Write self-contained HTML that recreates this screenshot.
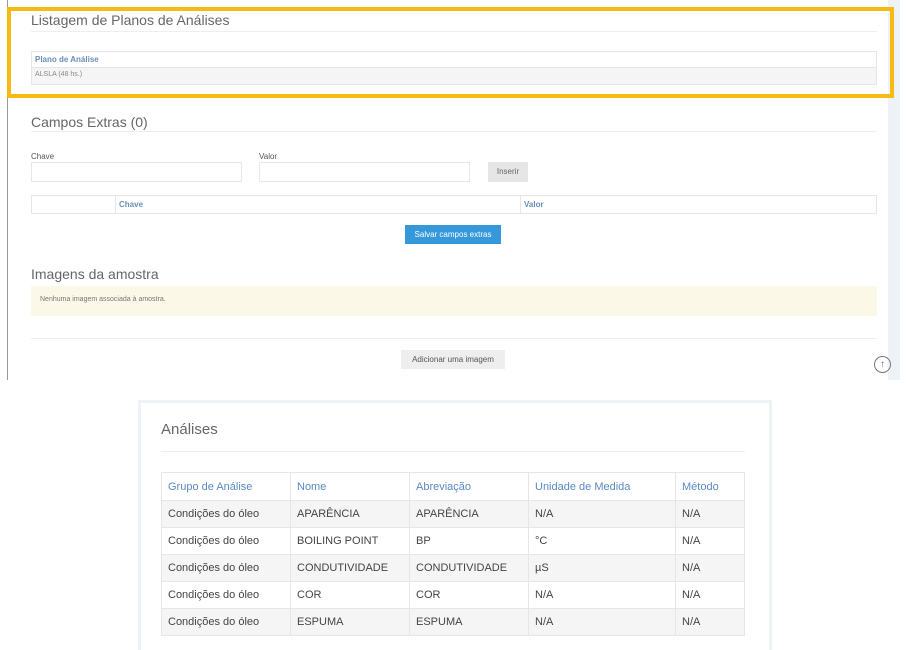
<!DOCTYPE html>
<html><head><meta charset="utf-8"><style>
*{box-sizing:border-box;margin:0;padding:0}
body{width:910px;height:642px;background:#fff;font-family:"Liberation Sans",sans-serif;position:relative;overflow:hidden;color:#555}
.abs{position:absolute}
.h{font-size:14px;color:#666}
.hr{position:absolute;height:1px;background:#eee}
.lbl{font-size:8px;color:#555}
.inp{position:absolute;border:1px solid #e8e8e8;background:#fff}
table{border-collapse:collapse}
</style></head><body>
<div class="abs" style="left:7px;top:0;width:1px;height:380px;background:#999"></div>
<div class="abs" style="left:888px;top:0;width:12px;height:380px;background:#eef2f7"></div>
<div class="abs h" style="left:31px;top:12px">Listagem de Planos de Análises</div>
<div class="hr" style="left:31px;top:31px;width:846px"></div>
<div class="abs" style="left:31px;top:51px;width:846px;height:34px;border:1px solid #e6e6e6">
 <div style="height:16px;border-bottom:1px solid #e6e6e6;font-size:8px;color:#6a8fbf;font-weight:bold;padding:3px 0 0 3px">Plano de Análise</div>
 <div style="height:16px;background:#f5f5f5;font-size:7px;color:#888;padding:3px 0 0 3px">ALSLA (48 hs.)</div>
</div>
<div class="abs" style="left:7px;top:7px;width:887px;height:91px;border:4px solid #f5bb12"></div>
<div class="abs h" style="left:31px;top:114px">Campos Extras (0)</div>
<div class="hr" style="left:31px;top:131px;width:846px"></div>
<div class="abs lbl" style="left:31px;top:152px">Chave</div>
<div class="abs lbl" style="left:259px;top:152px">Valor</div>
<div class="inp" style="left:31px;top:162px;width:211px;height:20px"></div>
<div class="inp" style="left:259px;top:162px;width:211px;height:20px"></div>
<div class="abs" style="left:488px;top:162px;width:40px;height:20px;background:#e6e6e6;font-size:8px;color:#666;text-align:center;line-height:20px">Inserir</div>
<div class="abs" style="left:31px;top:195px;width:846px;height:19px;border:1px solid #e6e6e6;font-size:8px;color:#6a8fbf;font-weight:bold">
 <div class="abs" style="left:83px;top:0;height:17px;border-left:1px solid #e6e6e6;padding:4px 0 0 3px">Chave</div>
 <div class="abs" style="left:488px;top:0;height:17px;border-left:1px solid #e6e6e6;padding:4px 0 0 3px">Valor</div>
</div>
<div class="abs" style="left:405px;top:225px;width:96px;height:19px;background:#3498db;color:#fff;font-size:8px;text-align:center;line-height:19px">Salvar campos extras</div>
<div class="abs h" style="left:31px;top:266px">Imagens da amostra</div>
<div class="abs" style="left:31px;top:286px;width:846px;height:30px;background:#fcf8e8;font-size:7px;color:#777;padding:10px 0 0 9px">Nenhuma imagem associada à amostra.</div>
<div class="hr" style="left:31px;top:338px;width:846px"></div>
<div class="abs" style="left:401px;top:350px;width:104px;height:19px;background:#eee;font-size:8px;color:#555;text-align:center;line-height:19px">Adicionar uma imagem</div>
<div class="abs" style="left:874px;top:356px;width:17px;height:17px;border:1px solid #777;border-radius:50%;font-size:10px;text-align:center;line-height:15px;color:#666">↑</div>

<div class="abs" style="left:138px;top:400px;width:634px;height:250px;border:3px solid #eef2f7;border-bottom:none;background:#fff"></div>
<div class="abs" style="left:161px;top:421px;font-size:15px;color:#666">Análises</div>
<div class="hr" style="left:161px;top:451px;width:584px"></div>
<table class="abs" style="left:161px;top:472px;width:584px;font-size:11px;color:#444">
<tr style="height:28px;color:#5a8ac6"><td style="width:129px;border:1px solid #e6e6e6;padding-left:6px">Grupo de Análise</td><td style="width:119px;border:1px solid #e6e6e6;padding-left:6px">Nome</td><td style="width:119px;border:1px solid #e6e6e6;padding-left:6px">Abreviação</td><td style="width:147px;border:1px solid #e6e6e6;padding-left:6px">Unidade de Medida</td><td style="border:1px solid #e6e6e6;padding-left:6px">Método</td></tr>
<tr style="height:27px;background:#f5f5f5"><td style="border:1px solid #e6e6e6;padding-left:6px">Condições do óleo</td><td style="border:1px solid #e6e6e6;padding-left:6px">APARÊNCIA</td><td style="border:1px solid #e6e6e6;padding-left:6px">APARÊNCIA</td><td style="border:1px solid #e6e6e6;padding-left:6px">N/A</td><td style="border:1px solid #e6e6e6;padding-left:6px">N/A</td></tr>
<tr style="height:27px"><td style="border:1px solid #e6e6e6;padding-left:6px">Condições do óleo</td><td style="border:1px solid #e6e6e6;padding-left:6px">BOILING POINT</td><td style="border:1px solid #e6e6e6;padding-left:6px">BP</td><td style="border:1px solid #e6e6e6;padding-left:6px">°C</td><td style="border:1px solid #e6e6e6;padding-left:6px">N/A</td></tr>
<tr style="height:27px;background:#f5f5f5"><td style="border:1px solid #e6e6e6;padding-left:6px">Condições do óleo</td><td style="border:1px solid #e6e6e6;padding-left:6px">CONDUTIVIDADE</td><td style="border:1px solid #e6e6e6;padding-left:6px">CONDUTIVIDADE</td><td style="border:1px solid #e6e6e6;padding-left:6px">µS</td><td style="border:1px solid #e6e6e6;padding-left:6px">N/A</td></tr>
<tr style="height:27px"><td style="border:1px solid #e6e6e6;padding-left:6px">Condições do óleo</td><td style="border:1px solid #e6e6e6;padding-left:6px">COR</td><td style="border:1px solid #e6e6e6;padding-left:6px">COR</td><td style="border:1px solid #e6e6e6;padding-left:6px">N/A</td><td style="border:1px solid #e6e6e6;padding-left:6px">N/A</td></tr>
<tr style="height:27px;background:#f5f5f5"><td style="border:1px solid #e6e6e6;padding-left:6px">Condições do óleo</td><td style="border:1px solid #e6e6e6;padding-left:6px">ESPUMA</td><td style="border:1px solid #e6e6e6;padding-left:6px">ESPUMA</td><td style="border:1px solid #e6e6e6;padding-left:6px">N/A</td><td style="border:1px solid #e6e6e6;padding-left:6px">N/A</td></tr>
</table>
</body></html>
